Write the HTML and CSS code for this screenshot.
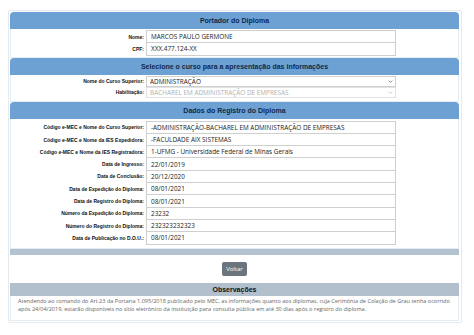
FILE: index.html
```html
<!DOCTYPE html>
<html lang="pt-BR">
<head>
    <meta charset="UTF-8">
    <meta name="viewport" content="width=device-width, initial-scale=1.0">
    <title>Consulta de Diploma</title>
    <link rel="stylesheet" href="styles.css">
</head>
<body>
    <div class="page">

        <div class="panel">
            <div class="panel-head">Portador do Diploma</div>
            <div class="panel-body">
                <div class="row">
                    <label>Nome:</label>
                    <input class="field" type="text" value="MARCOS PAULO GERMONE" readonly>
                </div>
                <div class="row">
                    <label>CPF:</label>
                    <input class="field" type="text" value="XXX.477.124-XX" readonly>
                </div>
            </div>
        </div>

        <div class="panel">
            <div class="panel-head">Selecione o curso para a apresentação das informações</div>
            <div class="panel-body selects">
                <div class="row row-select">
                    <label>Nome do Curso Superior:</label>
                    <div class="select-wrap">
                        <select class="field">
                            <option>ADMINISTRAÇÃO</option>
                        </select>
                        <svg class="chevron" viewBox="0 0 8 5" width="5" height="3"><path d="M1 1 L4 4 L7 1" fill="none" stroke="currentColor" stroke-width="1.4"/></svg>
                    </div>
                </div>
                <div class="row row-select">
                    <label>Habilitação:</label>
                    <div class="select-wrap disabled">
                        <select class="field" disabled>
                            <option>BACHAREL EM ADMINISTRAÇÃO DE EMPRESAS</option>
                        </select>
                        <svg class="chevron" viewBox="0 0 8 5" width="5" height="3"><path d="M1 1 L4 4 L7 1" fill="none" stroke="currentColor" stroke-width="1.4"/></svg>
                    </div>
                </div>
            </div>
        </div>

        <div class="panel">
            <div class="panel-head">Dados do Registro do Diploma</div>
            <div class="panel-body records">
                <div class="row"><label>Código e-MEC e Nome do Curso Superior:</label><input class="field" type="text" value="-ADMINISTRAÇÃO-BACHAREL EM ADMINISTRAÇÃO DE EMPRESAS" readonly></div>
                <div class="row"><label>Código e-MEC e Nome da IES Expedidora:</label><input class="field" type="text" value="-FACULDADE AIX SISTEMAS" readonly></div>
                <div class="row"><label>Código e-MEC e Nome da IES Registradora:</label><input class="field" type="text" value="1-UFMG - Universidade Federal de Minas Gerais" readonly></div>
                <div class="row"><label>Data de Ingresso:</label><input class="field" type="text" value="22/01/2019" readonly></div>
                <div class="row"><label>Data de Conclusão:</label><input class="field" type="text" value="20/12/2020" readonly></div>
                <div class="row"><label>Data de Expedição do Diploma:</label><input class="field" type="text" value="08/01/2021" readonly></div>
                <div class="row"><label>Data de Registro do Diploma:</label><input class="field" type="text" value="08/01/2021" readonly></div>
                <div class="row"><label>Número da Expedição do Diploma:</label><input class="field" type="text" value="23232" readonly></div>
                <div class="row"><label>Número do Registro do Diploma:</label><input class="field" type="text" value="232323232323" readonly></div>
                <div class="row"><label>Data de Publicação no D.O.U.:</label><input class="field" type="text" value="08/01/2021" readonly></div>
            </div>
            <div class="panel-foot"></div>
        </div>

        <div class="actions">
            <button type="button" class="btn">Voltar</button>
        </div>

        <div class="panel notes">
            <div class="panel-head">Observações</div>
            <div class="panel-body">
                <p>Atendendo ao comando do Art.23 da Portaria 1.095/2018 publicado pelo MEC, as informações quanto aos diplomas, cuja Cerimônia de Colação de Grau tenha ocorrido após 24/04/2019, estarão disponíveis no sítio eletrônico da instituição para consulta pública em até 30 dias após o registro do diploma.</p>
            </div>
        </div>

    </div>
</body>
</html>
```

FILE: styles.css
```css
body {
    margin: 0;
    background: #fff;
    font-family: "Liberation Sans", Arial, sans-serif;
}
.page {
    margin: 10px 12px 0 8px;
    padding: 1px 2px 1px 1px;
    border: 1px solid #e4eaf0;
    border-radius: 2px;
}
.panel-head {
    height: 17px;
    line-height: 17px;
    background: #6da1d3;
    border-radius: 4px 4px 0 0;
    text-align: center;
    font-weight: bold;
    font-size: 7px;
    color: #10294b;
}
.panel-body {
    padding: 1px 0;
    border: 1px solid #e3ebf3;
    border-top: none;
}
.panel-body.selects {
    padding: 1px 0 3px;
}
.panel-body.records {
    padding: 2px 0 3px;
}
.row {
    display: grid;
    grid-template-columns: 133px 250px;
    column-gap: 2px;
    align-items: center;
}
.row + .row {
    margin-top: -1px;
}
label {
    text-align: right;
    font-weight: bold;
    font-size: 5px;
    line-height: 6px;
    color: #111;
}
.field {
    display: block;
    box-sizing: border-box;
    width: 100%;
    height: 13.3px;
    margin: 0;
    padding: 0 0 0 4px;
    border: 1px solid #cfcfcf;
    border-radius: 0;
    background: #fff;
    font-family: "Open Sans", sans-serif;
    font-size: 6.4px;
    color: #222;
    outline: none;
}
.row-select + .row-select {
    margin-top: 0;
}
.row-select .field {
    height: 11px;
    line-height: 9px;
    appearance: none;
    -webkit-appearance: none;
    padding: 0 0 0 3px;
}
.select-wrap {
    position: relative;
    height: 11px;
}
.chevron {
    position: absolute;
    right: 3px;
    top: 4px;
    color: #777;
}
.select-wrap.disabled .field {
    color: #b0b0b0;
    border-color: #e2e2e2;
    opacity: 1;
}
.select-wrap.disabled .chevron {
    color: #c4c4c4;
}
.panel-foot {
    height: 6px;
    background: #b3c2cf;
}
.actions {
    display: flex;
    justify-content: center;
    padding: 7px 0;
}
.btn {
    height: 14px;
    padding: 0 4px;
    border: none;
    border-radius: 2px;
    background: #6c757d;
    color: #fff;
    font-family: "Open Sans", sans-serif;
    font-size: 6px;
}
.notes .panel-head {
    height: 13px;
    line-height: 13px;
    background: #b2c0cd;
    border-radius: 0;
    color: #111;
}
.notes .panel-body {
    padding: 1px 4px 6px 7px;
}
.notes p {
    margin: 0;
    font-family: "Open Sans", sans-serif;
    font-size: 5.55px;
    line-height: 8.6px;
    color: #666;
}
```
